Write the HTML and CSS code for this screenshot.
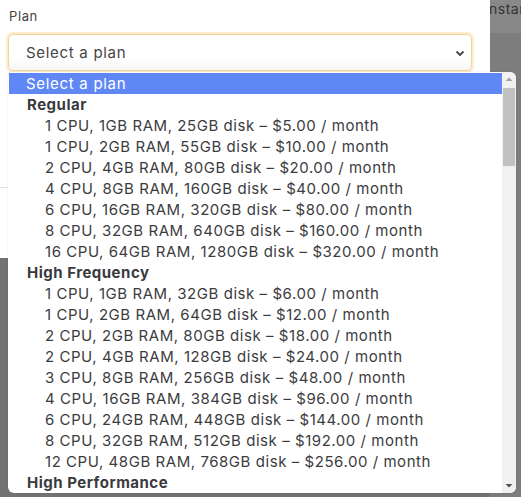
FILE: index.html
```html
<!DOCTYPE html>
<html>
<head>
<meta charset="utf-8">
<link rel="stylesheet" href="styles.css">
</head>
<body>
<div class="page">
  <div class="modal">
    <div class="field">
      <label class="label">Plan</label>
      <div class="select">
        <span>Select a plan</span>
        <svg class="chev" width="10" height="7" viewBox="0 0 10 7"><path d="M1.5 1.5 L5 5 L8.5 1.5" fill="none" stroke="#444" stroke-width="1.8"/></svg>
      </div>
    </div>
    <div class="footer"></div>
  </div>
  <div class="behind">
    <div class="behind-head">nstances</div>
  </div>

  <div class="dropdown">
    <div class="list">
      <div class="opt selected">Select a plan</div>
      <div class="group">Regular</div>
      <div class="opt item">1 CPU, 1GB RAM, 25GB disk – $5.00 / month</div>
      <div class="opt item">1 CPU, 2GB RAM, 55GB disk – $10.00 / month</div>
      <div class="opt item">2 CPU, 4GB RAM, 80GB disk – $20.00 / month</div>
      <div class="opt item">4 CPU, 8GB RAM, 160GB disk – $40.00 / month</div>
      <div class="opt item">6 CPU, 16GB RAM, 320GB disk – $80.00 / month</div>
      <div class="opt item">8 CPU, 32GB RAM, 640GB disk – $160.00 / month</div>
      <div class="opt item">16 CPU, 64GB RAM, 1280GB disk – $320.00 / month</div>
      <div class="group">High Frequency</div>
      <div class="opt item">1 CPU, 1GB RAM, 32GB disk – $6.00 / month</div>
      <div class="opt item">1 CPU, 2GB RAM, 64GB disk – $12.00 / month</div>
      <div class="opt item">2 CPU, 2GB RAM, 80GB disk – $18.00 / month</div>
      <div class="opt item">2 CPU, 4GB RAM, 128GB disk – $24.00 / month</div>
      <div class="opt item">3 CPU, 8GB RAM, 256GB disk – $48.00 / month</div>
      <div class="opt item">4 CPU, 16GB RAM, 384GB disk – $96.00 / month</div>
      <div class="opt item">6 CPU, 24GB RAM, 448GB disk – $144.00 / month</div>
      <div class="opt item">8 CPU, 32GB RAM, 512GB disk – $192.00 / month</div>
      <div class="opt item">12 CPU, 48GB RAM, 768GB disk – $256.00 / month</div>
      <div class="group">High Performance</div>
    </div>
    <div class="scrollbar">
      <svg class="arrow" width="14" height="14" viewBox="0 0 14 14"><path d="M3.5 9 L7 5.5 L10.5 9 Z" fill="#a3a3a3"/></svg>
      <div class="track"><div class="thumb"></div></div>
      <svg class="arrow" width="14" height="14" viewBox="0 0 14 14"><path d="M3.5 5 L7 8.5 L10.5 5 Z" fill="#505050"/></svg>
    </div>
  </div>
</div>
</body>
</html>
```
FILE: styles.css
```css
html, body {
  margin: 0;
  padding: 0;
}
body {
  font-family: Inter, "Liberation Sans", sans-serif;
  color: #3b3b3f;
}
.page {
  position: relative;
  width: 521px;
  height: 497px;
  overflow: hidden;
  background: #727272;
  display: flex;
  align-items: flex-start;
}
.modal {
  width: 490px;
  height: 258px;
  background: #ffffff;
  flex: none;
  display: flex;
  flex-direction: column;
}
.field {
  padding: 7px 0 0 8px;
  height: 180px;
}
.label {
  display: block;
  font-size: 13px;
  line-height: 18px;
  letter-spacing: 0.6px;
  color: #444;
  padding-left: 1px;
  margin-bottom: 9px;
}
.select {
  width: 464px;
  height: 37px;
  box-sizing: border-box;
  border: 1px solid #f1d59b;
  box-shadow: 0 0 0 2px #fcedcf;
  border-radius: 5px;
  background: linear-gradient(#ffffff 60%, #f7f7f7);
  display: flex;
  align-items: center;
  justify-content: space-between;
  padding: 0 6px 0 17px;
  font-size: 15px;
  letter-spacing: 0.7px;
  color: #454545;
}
.chev {
  margin-top: 1px;
}
.footer {
  border-top: 1px solid #e2e2e2;
  flex: 1;
}
.behind {
  flex: 1;
  height: 497px;
  background: #7d7d7d;
  overflow: hidden;
}
.behind-head {
  height: 33px;
  background: #888888;
  color: #333;
  font-size: 14px;
  line-height: 17px;
  letter-spacing: 0.5px;
  white-space: nowrap;
  margin-left: -1px;
}
.dropdown {
  position: absolute;
  left: 8px;
  top: 72px;
  width: 508px;
  height: 421px;
  background: #fff;
  border-radius: 4px 6px 6px 6px;
  display: flex;
  overflow: hidden;
  box-shadow: 0 0 1px rgba(0,0,0,0.3);
}
.list {
  flex: 1;
  padding-left: 1px;
  padding-top: 1px;
}
.opt, .group {
  height: 21px;
  line-height: 21px;
  font-size: 15px;
  letter-spacing: 0.55px;
  white-space: nowrap;
  color: #3c3c40;
}
.selected {
  background: #6087f6;
  color: #ffffff;
  padding-left: 17px;
  letter-spacing: 0.7px;
}
.group {
  font-weight: 700;
  padding-left: 18px;
  color: #3a3a3e;
  letter-spacing: 0.5px;
}
.item {
  padding-left: 36px;
}
.scrollbar {
  width: 14px;
  background: #f1f1f1;
  display: flex;
  flex-direction: column;
}
.arrow {
  display: block;
  flex: none;
}
.track {
  flex: 1;
  padding: 2px 1px 0 1px;
}
.thumb {
  height: 78px;
  background: #c1c1c1;
}
```
